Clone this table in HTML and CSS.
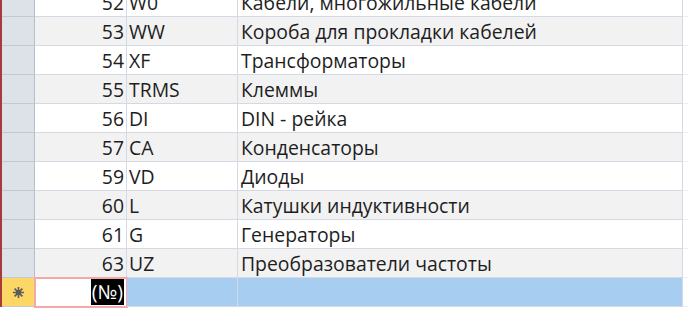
FILE: index.html
```html
<!DOCTYPE html>
<html lang="ru">
<head>
<meta charset="utf-8">
<link rel="stylesheet" href="styles.css">
</head>
<body>
<div class="sheet">
  <div class="row"><div class="sel"></div><div class="num">52</div><div class="code">W0</div><div class="name">Кабели, многожильные кабели</div><div class="rest"></div></div>
  <div class="row alt"><div class="sel"></div><div class="num">53</div><div class="code">WW</div><div class="name">Короба для прокладки кабелей</div><div class="rest"></div></div>
  <div class="row"><div class="sel"></div><div class="num">54</div><div class="code">XF</div><div class="name">Трансформаторы</div><div class="rest"></div></div>
  <div class="row alt"><div class="sel"></div><div class="num">55</div><div class="code">TRMS</div><div class="name">Клеммы</div><div class="rest"></div></div>
  <div class="row"><div class="sel"></div><div class="num">56</div><div class="code">DI</div><div class="name">DIN - рейка</div><div class="rest"></div></div>
  <div class="row alt"><div class="sel"></div><div class="num">57</div><div class="code">CA</div><div class="name">Конденсаторы</div><div class="rest"></div></div>
  <div class="row"><div class="sel"></div><div class="num">59</div><div class="code">VD</div><div class="name">Диоды</div><div class="rest"></div></div>
  <div class="row alt"><div class="sel"></div><div class="num">60</div><div class="code">L</div><div class="name">Катушки индуктивности</div><div class="rest"></div></div>
  <div class="row"><div class="sel"></div><div class="num">61</div><div class="code">G</div><div class="name">Генераторы</div><div class="rest"></div></div>
  <div class="row alt"><div class="sel"></div><div class="num">63</div><div class="code">UZ</div><div class="name">Преобразователи частоты</div><div class="rest"></div></div>
  <div class="row new">
    <div class="sel star"><svg width="11" height="11" viewBox="0 0 11 11"><g stroke="#5a5a5a" stroke-width="1.6"><path d="M5.5 0V11M0 5.5H11M1.6 1.6L9.4 9.4M9.4 1.6L1.6 9.4"/></g><rect x="3" y="3" width="5" height="5" fill="#5a5a5a"/></svg></div>
    <div class="num current"><span class="hl">(№)</span></div><div class="code"></div><div class="name"></div><div class="rest"></div>
  </div>
</div>
</body>
</html>
```
FILE: styles.css
```css
html, body {
  margin: 0;
  padding: 0;
  background: #ffffff;
  overflow: hidden;
}
body {
  width: 688px;
  height: 310px;
}
.sheet {
  margin-top: -12px;
  border-left: 2px solid #a63a3c;
  font-family: "Open Sans", "Noto Sans", sans-serif;
  font-size: 19.4px;
  color: #1e1e1e;
}
.row {
  display: grid;
  grid-template-columns: 33px 92px 111px 445px 1fr;
  height: 29px;
  background: #ffffff;
}
.row > div {
  box-sizing: border-box;
  height: 29px;
  line-height: 28px;
  border-bottom: 1px solid #d3dae6;
  border-right: 1px solid #d3dae6;
  white-space: nowrap;
  overflow: hidden;
  padding-top: 1px;
}
.row.alt > div { background: #f2f2f2; }
.row > .sel {
  background: #dde2e8 !important;
  border-bottom-color: #c4c9cf;
  border-right-color: #b9bec5;
}
.row > .num { text-align: right; padding-right: 2px; }
.row > .code { padding-left: 2px; }
.row > .name { padding-left: 3px; }
.row > .rest {
  background: #ffffff !important;
  border-right: none;
  border-bottom-color: #eef0f3;
}
.row.new > div { background: #a7cef0; }
.row.new > .sel {
  background: #fdd765 !important;
  display: flex;
  align-items: center;
  justify-content: center;
  padding-top: 0;
}
.row.new > .num.current {
  background: #ffffff;
  outline: 2px solid #f4a8aa;
  outline-offset: -1px;
  padding-top: 0;
  padding-right: 2px;
}
.hl {
  display: inline-block;
  background: #000000;
  color: #ffffff;
  line-height: 26px;
  margin-top: 1px;
  padding: 0 1px;
}
```
